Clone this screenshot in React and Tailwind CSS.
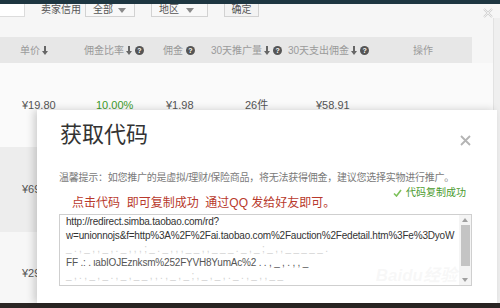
import React from "react"

const font = { fontFamily: '"Liberation Sans", "Noto Sans CJK SC", sans-serif' }

function Caret() {
    return (
        <svg width="8" height="5" viewBox="0 0 8 5">
            <path d="M0 0 L8 0 L4 5 Z" fill="#8a8a8a" />
        </svg>
    )
}

function Down() {
    return (
        <svg width="6" height="9" viewBox="0 0 6 9" className="ml-[2px]">
            <path d="M2 0 H4 V5 H6 L3 9 L0 5 H2 Z" fill="#666" />
        </svg>
    )
}

function Help() {
    return (
        <span className="ml-[3px] inline-flex h-[9px] w-[9px] items-center justify-center rounded-full bg-[#555] text-[7px] font-bold leading-none text-white">?</span>
    )
}

function Modal() {
    return (
        <div className="absolute left-[37px] top-[110px] h-[193px] w-[460px] bg-white shadow-[-3px_0_8px_rgba(0,0,0,0.18)]">
            {/* close */}
            <svg width="11" height="11" viewBox="0 0 11 11" className="absolute left-[423px] top-[25px]">
                <path d="M1 1 L10 10 M10 1 L1 10" stroke="#b4b4b4" strokeWidth="1.8" />
            </svg>

            <div className="px-[22px] pt-[12px]">
                <div className="pl-[1px] text-[22px] leading-[26px] text-[#333]">获取代码</div>

                <div className="mt-[24px] text-[10px] leading-[12px] tracking-[-0.25px] text-[#7a7a7a]">
                    温馨提示：如您推广的是虚拟/理财/保险商品，将无法获得佣金，建议您选择实物进行推广。
                </div>

                <div className="mt-[3px] flex h-[23px] justify-between">
                    <div className="ml-[13px] self-end text-[12px] leading-[14px] text-[#b8392c]">
                        点击代码&nbsp;&nbsp;即可复制成功&nbsp;&nbsp;通过QQ 发给好友即可。
                    </div>
                    <div className="mr-[9px] flex items-center self-start text-[10px] leading-[12px] text-[#4a9a2c]">
                        <svg width="9" height="8" viewBox="0 0 9 8" className="mr-[4px]">
                            <path d="M1 4.5 L3.5 7 L8 1" stroke="#7cc15a" strokeWidth="1.6" fill="none" />
                        </svg>
                        代码复制成功
                    </div>
                </div>

                {/* textarea */}
                <div className="relative mt-[4px] flex h-[72px] w-[413px] border border-[#cfcfcf]">
                    <div className="flex-1 overflow-hidden pl-[6px] text-[10px] leading-[13.5px] tracking-[-0.2px] text-[#333]">
                        <div>http://redirect.simba.taobao.com/rd?</div>
                        <div className="whitespace-nowrap">w=unionnojs&amp;f=http%3A%2F%2Fai.taobao.com%2Fauction%2Fedetail.htm%3Fe%3DyoW</div>
                        <div className="whitespace-nowrap text-[#d2d2d2]">_ . , _ , , _ , . _ , , , ; _ . _ , , , _ _ , , _ _ _ . _ , _ ; _ , , _ _ _ _ _ .</div>
                        <div className="whitespace-nowrap text-[#555]">FF .: . ιabIOJEznksm%252FYVH8YumAc%2 . . , _ , . , , _</div>
                        <div className="whitespace-nowrap text-[#cfcfcf]">_ , . , _ , _ . , _ , _ _ , , . , _ , _ ; , _ , _ , . _ . , _ , , _ _</div>
                    </div>
                    <div className="flex w-[12px] flex-col items-center bg-[#f4f4f4]">
                        <svg width="6" height="4" viewBox="0 0 6 4" className="mt-[3px]">
                            <path d="M0 4 L3 0 L6 4 Z" fill="#a0a0a0" />
                        </svg>
                        <div className="mt-[3px] h-[41px] w-[9px] bg-[#c4c4c4]" />
                        <svg width="6" height="4" viewBox="0 0 6 4" className="mt-auto mb-[3px]">
                            <path d="M0 0 L3 4 L6 0 Z" fill="#a0a0a0" />
                        </svg>
                    </div>
                    <div className="absolute bottom-[-1px] right-[14px] text-[17px] font-bold italic leading-[20px] text-[rgba(225,225,225,0.25)]">
                        Baidu经验
                    </div>
                </div>
            </div>
        </div>
    )
}

export default function App() {
    return (
        <div style={font} className="relative flex h-[308px] w-[500px] flex-col overflow-hidden bg-[#f6f6f6]">
            {/* top dark band */}
            <div className="h-[4px] bg-[#1e3641]" />

            {/* filter row */}
            <div className="flex h-[14px] items-start text-[10px] text-[#555]">
                <div className="h-[13px] w-[25px] border-b border-r border-[#dcdcdc] bg-white" />
                <div className="ml-[16px] leading-[11px]">卖家信用</div>
                <div className="ml-[4px] flex h-[13px] w-[50px] items-center justify-between border border-t-0 border-[#d2d2d2] bg-[#f8f8f8] pl-[7px] pr-[8px] leading-none">
                    <span>全部</span>
                    <Caret />
                </div>
                <div className="ml-[16px] flex h-[13px] w-[57px] items-center justify-between border border-t-0 border-[#d2d2d2] bg-[#f8f8f8] pl-[7px] pr-[13px] leading-none">
                    <span>地区</span>
                    <Caret />
                </div>
                <div className="ml-[16px] flex h-[13px] w-[35px] items-center justify-center border border-t-0 border-[#d2d2d2] bg-[#f3f3f3] leading-none">
                    确定
                </div>
                <svg width="10" height="10" viewBox="0 0 10 10" className="ml-auto mr-[7px] mt-[4px]">
                    <path d="M1 1 L9 9 M9 1 L1 9" stroke="#d0d0d0" strokeWidth="2" />
                    <path d="M1 1 L9 9 M9 1 L1 9" stroke="#f6f6f6" strokeWidth="0.8" />
                </svg>
            </div>

            <div className="flex flex-1">
                <div className="flex w-[493px] flex-col">
                    <div className="h-[19px]" />
                    {/* table header */}
                    <div className="flex h-[26px] w-[472px] items-center bg-[#e7e7e7] pl-[20px] text-[10px] text-[#9a9a9a]">
                        <div className="flex w-[64px] items-center">单价<Down /></div>
                        <div className="flex w-[79px] items-center">佣金比率<Down /><Help /></div>
                        <div className="flex w-[48px] items-center">佣金<Help /></div>
                        <div className="flex w-[77px] items-center">30天推广量<Down /><Help /></div>
                        <div className="flex w-[125px] items-center">30天支出佣金<Down /><Help /></div>
                        <div>操作</div>
                    </div>
                    {/* rows */}
                    <div className="flex h-[84px] items-center bg-[#fafafa] pl-[22px] text-[11px] text-[#555]">
                        <div className="w-[74px]">¥19.80</div>
                        <div className="w-[70px] text-[#3d9a2a]">10.00%</div>
                        <div className="w-[79px]">¥1.98</div>
                        <div className="w-[71px]">26件</div>
                        <div>¥58.91</div>
                    </div>
                    <div className="flex h-[85px] items-center bg-[#ededed] pl-[22px] text-[11px] text-[#555]">
                        <div>¥69.00</div>
                    </div>
                    <div className="flex flex-1 items-center bg-[#f7f7f7] pl-[22px] text-[11px] text-[#555]">
                        <div className="mt-[12px]">¥29.90</div>
                    </div>
                </div>
                <div className="flex-1 border-l border-[#e2e2e2] bg-[#efefef]" />
            </div>

            {/* bottom dark band */}
            <div className="h-[5px] bg-[#2b2624]" />

            <Modal />
        </div>
    )
}
